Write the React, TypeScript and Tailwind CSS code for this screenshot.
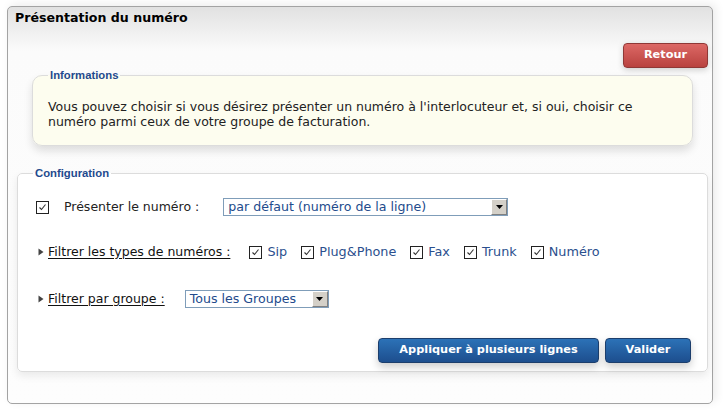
import React from 'react';

const Check = ({ checked = true }: { checked?: boolean }) => (
    <span className="w-[13px] h-[13px] shrink-0 border border-[#222] bg-white flex items-center justify-center">
        {checked && (
            <svg width="9" height="9" viewBox="0 0 9 9">
                <path d="M1.5 4.5 L3.5 6.5 L7.5 1.5" fill="none" stroke="#333" strokeWidth="1.1" />
            </svg>
        )}
    </span>
);

const Arrow = () => (
    <svg width="6" height="8" viewBox="0 0 6 8" className="shrink-0">
        <path d="M0.5 0.5 L5.5 4 L0.5 7.5 Z" fill="#444" />
    </svg>
);

const Select = ({ label, width }: { label: string; width: string }) => (
    <div className={`${width} h-[18px] border border-[#7f9db9] bg-white flex items-center`}>
        <span className="flex-1 pl-[4px] text-[#234b8c] text-[12.6px] leading-[16px] truncate">{label}</span>
        <span className="w-[16px] h-[16px] bg-[#d4d0c8] border-t border-l border-white border-r border-b border-r-[#808080] border-b-[#808080] flex items-center justify-center">
            <svg width="7" height="4" viewBox="0 0 7 4">
                <path d="M0 0 L7 0 L3.5 4 Z" fill="#000" />
            </svg>
        </span>
    </div>
);

const types = ['Sip', 'Plug&Phone', 'Fax', 'Trunk', 'Numéro'];

const legend =
    "ml-[15px] px-[2px] font-['Liberation_Sans',Arial,sans-serif] text-[11.3px] font-bold leading-[14px] text-[#1f4a8e]";

const blueBtn =
    'h-[25px] rounded-[4px] border border-[#1c3e6c] bg-[linear-gradient(to_bottom,#2c72b7,#1d4e8e)] text-white text-[11.3px] font-bold shadow-[0_4px_8px_rgba(0,0,0,0.2)]';

export default function App() {
    return (
        <div className="min-h-screen bg-white font-['DejaVu_Sans',sans-serif] text-[12.5px] text-[#222]">
            <div className="ml-[7px] mt-[6px] w-[706px] h-[398px] rounded-[5px] border border-[#a3a3a3] bg-[linear-gradient(to_bottom,#e1e1e1,#fbfbfb_44px,#fdfdfd)] shadow-[3px_-2px_10px_rgba(0,0,0,0.08)] flex flex-col">
                <h1 className="pl-[7px] pt-[3px] text-[12.6px] font-bold leading-[16px] text-black">
                    Présentation du numéro
                </h1>

                <div className="flex justify-end pr-[4px] mt-[17px]">
                    <button className="w-[85px] h-[25px] rounded-[4px] border border-[#8f3836] bg-[linear-gradient(to_bottom,#dc6865,#b9423f)] text-white text-[11.3px] font-bold shadow-[0_2px_6px_rgba(0,0,0,0.18)]">
                        Retour
                    </button>
                </div>

                <fieldset className="ml-[24px] mr-[19px] border border-[#dcdcdc] rounded-[10px] bg-[#fdfdef] shadow-[0_5px_8px_rgba(0,0,0,0.12)]">
                    <legend className={legend}>Informations</legend>
                    <p className="pl-[15px] pt-[17px] pb-[16px] leading-[15px]">
                        Vous pouvez choisir si vous désirez présenter un numéro à l'interlocuteur et, si oui, choisir ce
                        <br />
                        numéro parmi ceux de votre groupe de facturation.
                    </p>
                </fieldset>

                <fieldset className="mt-[20px] ml-[9px] mr-[4px] border border-[#dcdcdc] rounded-[5px] bg-white shadow-[0_4px_8px_rgba(0,0,0,0.08)]">
                    <legend className={legend}>Configuration</legend>
                    <div className="pt-[18px] pl-[18px] pr-[16px] pb-[8px] flex flex-col">
                        <div className="h-[18px] flex items-center">
                            <Check />
                            <span className="ml-[15px]">Présenter le numéro :</span>
                            <div className="ml-[24px]">
                                <Select label="par défaut (numéro de la ligne)" width="w-[285px]" />
                            </div>
                        </div>

                        <div className="mt-[27px] h-[18px] flex items-center">
                            <span className="ml-[2px]">
                                <Arrow />
                            </span>
                            <span className="ml-[4px] underline underline-offset-2 text-[#111]">
                                Filtrer les types de numéros :
                            </span>
                            <div className="ml-[19px] flex items-center">
                                {types.map((t) => (
                                    <div key={t} className="flex items-center mr-[14px]">
                                        <Check />
                                        <span className="ml-[5px] text-[#2b4f8e] text-[12.8px]">{t}</span>
                                    </div>
                                ))}
                            </div>
                        </div>

                        <div className="mt-[29px] h-[18px] flex items-center">
                            <span className="ml-[2px]">
                                <Arrow />
                            </span>
                            <span className="ml-[4px] underline underline-offset-2 text-[#111]">
                                Filtrer par groupe :
                            </span>
                            <div className="ml-[20px]">
                                <Select label="Tous les Groupes" width="w-[144px]" />
                            </div>
                        </div>

                        <div className="mt-[30px] flex justify-end gap-[6px]">
                            <button className={`w-[221px] ${blueBtn}`}>Appliquer à plusieurs lignes</button>
                            <button className={`w-[86px] ${blueBtn}`}>Valider</button>
                        </div>
                    </div>
                </fieldset>
            </div>
        </div>
    );
}
